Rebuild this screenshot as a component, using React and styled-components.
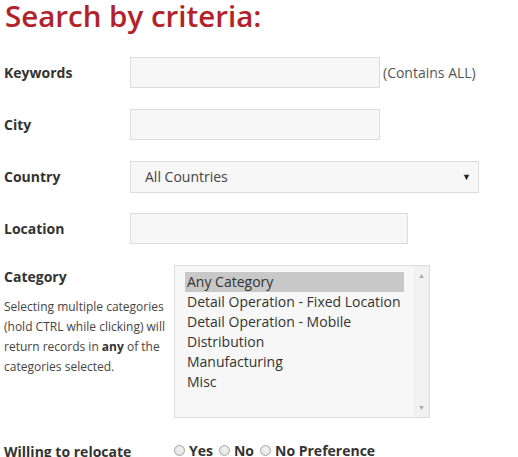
import React from 'react'
import styled, {createGlobalStyle} from 'styled-components'

const categories = [
  'Any Category',
  'Detail Operation - Fixed Location',
  'Detail Operation - Mobile',
  'Distribution',
  'Manufacturing',
  'Misc',
]

const App = () => {
  return (
    <Page>
      <GlobalStyle />
      <Title>Search by criteria:</Title>

      <Row>
        <Label>Keywords</Label>
        <TextBox width={250} />
        <Note>(Contains ALL)</Note>
      </Row>

      <Row>
        <Label>City</Label>
        <TextBox width={250} />
      </Row>

      <Row>
        <Label>Country</Label>
        <Select>
          <span>All Countries</span>
          <Arrow>▼</Arrow>
        </Select>
      </Row>

      <Row>
        <Label>Location</Label>
        <TextBox width={278} />
      </Row>

      <WideRow>
        <Side>
          <Label wide>Category</Label>
          <Help>
            Selecting multiple categories (hold CTRL while clicking) will return records in <b>any</b> of the categories selected.
          </Help>
        </Side>
        <ListBox>
          <Options>
            {categories.map((c, i) => (
              <Option key={c} selected={i === 0}>{c}</Option>
            ))}
          </Options>
          <ScrollBar>
            <ScrollArrow>▲</ScrollArrow>
            <ScrollArrow>▼</ScrollArrow>
          </ScrollBar>
        </ListBox>
      </WideRow>

      <WideRow center>
        <Side>
          <Label wide>Willing to relocate</Label>
        </Side>
        <Radios>
          <Radio /><RadioText>Yes</RadioText>
          <Radio /><RadioText>No</RadioText>
          <Radio /><RadioText>No Preference</RadioText>
        </Radios>
      </WideRow>
    </Page>
  )
}

export default App

const GlobalStyle = createGlobalStyle`
  body {
    margin: 0;
    background: #fff;
    font-family: "Open Sans", "Liberation Sans", sans-serif;
    color: #333;
  }
`

const Page = styled.div`
  padding: 0 4px;
`

const Title = styled.h1`
  margin: 0 0 0 1px;
  font-size: 29.5px;
  font-weight: 600;
  line-height: 32px;
  color: #b3222a;
  padding-bottom: 25px;
`

const Row = styled.div`
  display: flex;
  align-items: center;
  height: 31px;
  margin-bottom: 21px;
`

const Label = styled.div`
  width: ${p => (p.wide ? 'auto' : '126px')};
  font-size: 14px;
  font-weight: 700;
  color: #333;
  white-space: nowrap;
`

const TextBox = styled.div`
  width: ${p => p.width}px;
  height: 31px;
  box-sizing: border-box;
  border: 1px solid #dcdcdc;
  background: #f7f7f7;
`

const Note = styled.span`
  margin-left: 3px;
  font-size: 14px;
  color: #555;
`

const Select = styled.div`
  width: 349px;
  height: 32px;
  box-sizing: border-box;
  border: 1px solid #dcdcdc;
  background: #f7f7f7;
  display: flex;
  align-items: center;
  justify-content: space-between;
  padding: 0 7px 0 14px;
  font-size: 14px;
  color: #444;
`

const Arrow = styled.span`
  font-size: 9px;
  color: #222;
`

const WideRow = styled.div`
  display: flex;
  align-items: ${p => (p.center ? 'center' : 'flex-start')};
  margin-bottom: 22px;
`

const Side = styled.div`
  width: 170px;
  padding-top: 2px;
`

const Help = styled.p`
  margin: 11px 0 0;
  width: 168px;
  font-size: 12px;
  line-height: 20px;
  color: #444;
  b {
    font-weight: 700;
    color: #333;
  }
`

const ListBox = styled.div`
  width: 256px;
  height: 153px;
  box-sizing: border-box;
  border: 1px solid #dcdcdc;
  background: #f7f7f7;
  display: flex;
`

const Options = styled.div`
  flex: 1;
  padding: 6px 10px 0 10px;
`

const Option = styled.div`
  height: 20px;
  line-height: 20px;
  padding-left: 2px;
  font-size: 14px;
  color: #333;
  white-space: nowrap;
  background: ${p => (p.selected ? '#c8c8c8' : 'transparent')};
`

const ScrollBar = styled.div`
  width: 15px;
  background: #f1f1f1;
  display: flex;
  flex-direction: column;
  justify-content: space-between;
  align-items: center;
  padding: 5px 0;
`

const ScrollArrow = styled.span`
  font-size: 7px;
  color: #a9a9a9;
`

const Radios = styled.div`
  display: flex;
  align-items: center;
`

const Radio = styled.span`
  width: 11px;
  height: 11px;
  border-radius: 50%;
  box-sizing: border-box;
  border: 1px solid #a8a8a8;
  background: radial-gradient(circle at 50% 40%, #f4f4f4 0%, #dcdcdc 100%);
  margin-right: 4px;
`

const RadioText = styled.span`
  font-size: 14px;
  font-weight: 700;
  color: #333;
  margin-right: 6px;
`
